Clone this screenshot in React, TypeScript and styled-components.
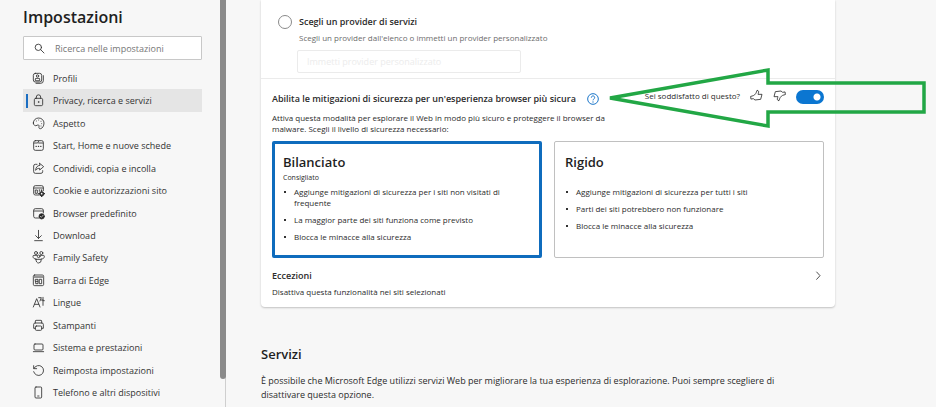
import React from "react";
import styled, { createGlobalStyle } from "styled-components";

const GlobalStyle = createGlobalStyle`
  *, *::before, *::after { box-sizing: border-box; }
  html, body, #root { height: 100%; }
  body {
    margin: 0;
    background: #f7f7f7;
    color: #2b2b2b;
    font-family: "Segoe UI", "Open Sans", "Noto Sans", sans-serif;
    font-size: 9px;
    overflow: hidden;
  }
  h1, h2, h3, p, ul { margin: 0; padding: 0; }
  ul { list-style: none; }
  button, input { font: inherit; color: inherit; }
  button { background: none; border: 0; padding: 0; cursor: pointer; }
`;

const Page = styled.div`
  position: relative;
  display: flex;
  min-height: 100%;
`;

const Sidebar = styled.aside`
  display: flex;
  flex-direction: column;
  flex: 0 0 220px;
  padding: 5px 18px 3px 23px;
`;

const Title = styled.h1`
  font-size: 16px;
  line-height: 24px;
  font-weight: 600;
  color: #1f1f1f;
`;

const SearchBox = styled.label`
  display: flex;
  align-items: center;
  gap: 10px;
  height: 24px;
  margin-top: 7px;
  padding: 0 10px;
  background: #fff;
  border: 1px solid #c8c8c8;
  border-radius: 1px;
`;

const SearchInput = styled.input`
  flex: 1;
  min-width: 0;
  border: 0;
  outline: 0;
  padding: 0;
  background: none;
  font-size: 9px;
  &::placeholder { color: #767676; opacity: 1; }
`;

const Nav = styled.nav`
  display: flex;
  flex: 1;
  margin-top: 7px;
`;

const NavList = styled.ul`
  display: grid;
  flex: 1;
  grid-auto-rows: 1fr;
`;

const NavLink = styled.a<{ $active?: boolean }>`
  display: flex;
  align-items: center;
  gap: 8px;
  height: 100%;
  padding-left: 6px;
  border-left: 3px solid transparent;
  color: #333;
  font-size: 9px;
  text-decoration: none;
  white-space: nowrap;
  background: ${(p) =>
    p.$active
      ? "linear-gradient(#1b6ec2, #1b6ec2) 0 50% / 2px 14px no-repeat, #e5e5e5"
      : "none"};
`;

const ScrollTrack = styled.div`
  display: flex;
  flex: 0 0 6px;
  padding-bottom: 28px;
  border-right: 1px solid #cfcfcf;
`;

const ScrollThumb = styled.div`
  flex: 1;
  margin-right: -1px;
  background: #8b8b8b;
  border-radius: 0 0 3px 3px;
`;

const Main = styled.main`
  flex: 1;
  min-width: 0;
  padding: 0 101px 0 35px;
`;

const Panel = styled.section`
  background: #fff;
  border-radius: 0 0 4px 4px;
  box-shadow: 0 1px 2px rgba(0, 0, 0, 0.22);
`;

const ProviderGroup = styled.div`
  display: grid;
  grid-template-columns: 14px 1fr;
  column-gap: 7px;
  padding: 15px 17px 5px;
  border-bottom: 1px solid #ebebeb;
`;

const Radio = styled.input`
  appearance: none;
  width: 14px;
  height: 14px;
  margin: 0;
  border: 1px solid #8a8a8a;
  border-radius: 50%;
  background: #fff;
`;

const ProviderLabel = styled.label`
  font-size: 9px;
  line-height: 14px;
  font-weight: 600;
`;

const ProviderHint = styled.p`
  grid-column: 2;
  margin-top: 3px;
  font-size: 8px;
  line-height: 12px;
  color: #6c6c6c;
`;

const ProviderInput = styled.input`
  grid-column: 2;
  width: 224px;
  height: 23px;
  margin: 6px 0 0 -2px;
  padding: 0 9px;
  background: #fff;
  border: 1px solid #ebebeb;
  border-radius: 2px;
  font-size: 9px;
  &::placeholder { color: #ececec; opacity: 1; }
`;

const Setting = styled.div`
  padding: 8px 11px 0;
`;

const SettingHeader = styled.div`
  display: flex;
  align-items: center;
  height: 20px;
`;

const SettingTitle = styled.h3`
  padding-top: 4px;
  font-size: 9px;
  line-height: 16px;
  font-weight: 600;
  white-space: nowrap;
`;

const IconButton = styled.button`
  display: flex;
`;

const HelpButton = styled(IconButton)`
  margin: 3px 0 0 11px;
`;

const Feedback = styled.div`
  display: flex;
  align-items: center;
  gap: 10px;
  margin-left: auto;
  padding-bottom: 3px;
  font-size: 8px;
  line-height: 12px;
  white-space: nowrap;
`;

const Switch = styled.input`
  appearance: none;
  width: 28px;
  height: 14px;
  margin: 2px 0 0;
  border-radius: 7px;
  background: radial-gradient(circle at 21px 7px, #fff 3px, transparent 4px), #0b76d1;
`;

const Description = styled.p`
  max-width: 344px;
  margin-top: 5px;
  font-size: 8px;
  line-height: 11px;
`;

const Levels = styled.div`
  display: grid;
  grid-template-columns: 1fr 1fr;
  gap: 12px;
  margin-top: 7px;
`;

const LevelCard = styled.label<{ $selected?: boolean }>`
  display: block;
  min-height: 117px;
  padding: ${(p) => (p.$selected ? "9px 8px" : "11px 10px")};
  border: ${(p) => (p.$selected ? "3px solid #0f6cbd" : "1px solid #c0c0c0")};
  border-radius: 2px;
  cursor: pointer;
`;

const HiddenRadio = styled.input`
  appearance: none;
  position: absolute;
  width: 0;
  height: 0;
  margin: 0;
`;

const LevelTitle = styled.h3`
  font-size: 13px;
  line-height: 18px;
  font-weight: 600;
  color: #1f1f1f;
`;

const LevelCaption = styled.p`
  height: 10px;
  margin-top: 2px;
  font-size: 7px;
  line-height: 10px;
`;

const LevelPoints = styled.ul`
  display: grid;
  gap: 6px;
  margin-top: 3px;
`;

const LevelPoint = styled.li`
  display: grid;
  grid-template-columns: 11px 1fr;
  padding-right: 26px;
  font-size: 8px;
  line-height: 11px;
  &::before {
    content: "";
    width: 2px;
    height: 2px;
    margin: 5px 0 0 1px;
    background: #333;
  }
`;

const LinkRow = styled.button`
  display: flex;
  width: 100%;
  justify-content: space-between;
  padding: 11px 11px 9px;
  text-align: left;
`;

const LinkText = styled.span`
  display: grid;
  gap: 3px;
  font-size: 8px;
  line-height: 12px;
`;

const LinkTitle = styled.span`
  font-size: 9px;
  line-height: 14px;
  font-weight: 600;
`;

const Services = styled.section`
  padding-top: 37px;
`;

const SectionTitle = styled.h2`
  font-size: 13px;
  line-height: 20px;
  font-weight: 600;
  color: #1f1f1f;
`;

const SectionText = styled.p`
  margin-top: 10px;
  padding-right: 30px;
  font-size: 9px;
  line-height: 14px;
`;

const Arrow = styled.svg`
  position: absolute;
  top: 66px;
  right: 9px;
  pointer-events: none;
`;

const Glyph = ({ size = 13, children }: { size?: number; children: React.ReactNode }) => (
  <svg
    width={size}
    height={size}
    viewBox={`0 0 ${size * 3} ${size * 3}`}
    fill="none"
    stroke="#333"
    strokeWidth="2.6"
    strokeLinecap="round"
    strokeLinejoin="round"
    aria-hidden="true"
  >
    {children}
  </svg>
);

const navItems: { label: string; active?: boolean; icon: React.ReactNode }[] = [
  {
    label: "Profili",
    icon: (
      <>
        <rect x="4" y="4" width="25" height="26" rx="6" />
        <circle cx="16.5" cy="12" r="3.5" />
        <path d="M10 25v-4q0-2 2-2h9q2 0 2 2v4zM34 11v15q0 8-8 8H12" />
      </>
    ),
  },
  {
    label: "Privacy, ricerca e servizi",
    active: true,
    icon: (
      <>
        <rect x="7" y="13" width="25" height="22" rx="4" />
        <path d="M13 13V9a6.5 6.5 0 0 1 13 0v4" />
        <circle cx="19.5" cy="24" r="1" />
      </>
    ),
  },
  {
    label: "Aspetto",
    icon: (
      <>
        <path d="M4 18C4 9 11 3 20 3s16 7 16 15c0 9-5 16-10 17-4 1-6-2-5-6 1-5-2-7-6-4-5 3-11 0-11-7z" />
        <path d="M13 12h.1M20 9h.1M27 13h.1M29 20h.1M27 27h.1" />
      </>
    ),
  },
  {
    label: "Start, Home e nuove schede",
    icon: (
      <>
        <rect x="5" y="5" width="29" height="29" rx="5" />
        <path d="M6 12h11l3-5M20 12h13" />
        <path d="M12 22h1M19 22h1M26 22h1" strokeWidth="3.5" />
      </>
    ),
  },
  {
    label: "Condividi, copia e incolla",
    icon: (
      <>
        <path d="M15 7h-5a5 5 0 0 0-5 5v17a5 5 0 0 0 5 5h17a5 5 0 0 0 5-5v-3" />
        <path d="M23 4l12 10-12 10v-5c-6 0-10 2-12 6 0-9 5-14 12-15z" />
      </>
    ),
  },
  {
    label: "Cookie e autorizzazioni sito",
    icon: (
      <>
        <path d="M20 33H10a5 5 0 0 1-5-5V10a5 5 0 0 1 5-5h19a5 5 0 0 1 5 5v10M5 12h29" />
        <path d="M11 18h5v10h-5zM22 17v5M28 17v3" />
        <circle cx="29" cy="29" r="5" strokeWidth="5" />
        <path d="M29 20v2M29 36v2M20 29h2M36 29h2" strokeWidth="4" />
      </>
    ),
  },
  {
    label: "Browser predefinito",
    icon: (
      <>
        <path d="M20 33H10a5 5 0 0 1-5-5V10a5 5 0 0 1 5-5h19a5 5 0 0 1 5 5v8M5 12h29" />
        <circle cx="29" cy="28" r="8" fill="#222" />
        <path d="M25 28l3 3 5-6" stroke="#fff" strokeWidth="2" />
      </>
    ),
  },
  {
    label: "Download",
    icon: <path d="M19.5 4v24M11 20l8.500 8.500 8.500-8.500M8 35h23" />,
  },
  {
    label: "Family Safety",
    icon: (
      <>
        <circle cx="12" cy="6" r="4.500" />
        <circle cx="28" cy="6" r="4.500" />
        <circle cx="20" cy="16" r="4" />
        <path d="M15 13H6q-3 0-3 3c0 5 3 8 9 8M25 13h9q3 0 3 3c0 5-3 8-9 8M12 25h16q0 11-8 11t-8-11z" />
      </>
    ),
  },
  {
    label: "Barra di Edge",
    icon: (
      <>
        <rect x="4" y="3" width="31" height="32" rx="4" />
        <path d="M5 9h29" strokeWidth="4" stroke="#777" />
        <path d="M11 16h7v6h-7zM11 22v7h7v-7M23 16h6v13h-6z" />
      </>
    ),
  },
  {
    label: "Lingue",
    icon: <path d="M4 33L14 8l10 25M8 25h12M20 5h8l-4 10M33 4v24M33 12h-5M33 14h4" />,
  },
  {
    label: "Stampanti",
    icon: (
      <>
        <path d="M10 12V6q0-2 2-2h15q2 0 2 2v6M10 28H5V16q0-4 4-4h21q4 0 4 4v12h-5" />
        <rect x="10" y="21" width="19" height="13" rx="3" />
      </>
    ),
  },
  {
    label: "Sistema e prestazioni",
    icon: (
      <>
        <rect x="6" y="9" width="27" height="18" rx="3" />
        <path d="M4 32h31" />
      </>
    ),
  },
  {
    label: "Reimposta impostazioni",
    icon: <path d="M5 5v9h9M6 13A15 15 0 1 1 5 23" />,
  },
  {
    label: "Telefono e altri dispositivi",
    icon: (
      <>
        <rect x="9" y="3" width="20" height="33" rx="3" />
        <path d="M17 30h4" />
      </>
    ),
  },
];

const levels = [
  {
    title: "Bilanciato",
    caption: "Consigliato",
    selected: true,
    points: [
      "Aggiunge mitigazioni di sicurezza per i siti non visitati di frequente",
      "La maggior parte dei siti funziona come previsto",
      "Blocca le minacce alla sicurezza",
    ],
  },
  {
    title: "Rigido",
    caption: "",
    selected: false,
    points: [
      "Aggiunge mitigazioni di sicurezza per tutti i siti",
      "Parti dei siti potrebbero non funzionare",
      "Blocca le minacce alla sicurezza",
    ],
  },
];

const thumb = "M3 22l7-2c6-3 9-8 11-16 5 0 6 4 4 9l-1 3h12l-4 15-17 2-5-4-6 1z";

export default function App() {
  return (
    <>
      <GlobalStyle />
      <Page>
        <Sidebar>
          <Title>Impostazioni</Title>
          <SearchBox>
            <Glyph size={11}>
              <circle cx="13" cy="13" r="9.500" />
              <path d="M20 20l10 10" />
            </Glyph>
            <SearchInput
              type="search"
              placeholder="Ricerca nelle impostazioni"
              aria-label="Ricerca nelle impostazioni"
            />
          </SearchBox>
          <Nav>
            <NavList>
              {navItems.map((item) => (
                <li key={item.label}>
                  <NavLink
                    href="#"
                    $active={item.active}
                    aria-current={item.active ? "page" : undefined}
                  >
                    <Glyph>{item.icon}</Glyph>
                    {item.label}
                  </NavLink>
                </li>
              ))}
            </NavList>
          </Nav>
        </Sidebar>
        <ScrollTrack>
          <ScrollThumb />
        </ScrollTrack>
        <Main>
          <Panel>
            <ProviderGroup>
              <Radio type="radio" name="provider" id="provider-custom" />
              <ProviderLabel htmlFor="provider-custom">
                Scegli un provider di servizi
              </ProviderLabel>
              <ProviderHint>
                Scegli un provider dall'elenco o immetti un provider personalizzato
              </ProviderHint>
              <ProviderInput
                disabled
                placeholder="Immetti provider personalizzato"
                aria-label="Immetti provider personalizzato"
              />
            </ProviderGroup>
            <Setting>
              <SettingHeader>
                <SettingTitle>
                  Abilita le mitigazioni di sicurezza per un'esperienza browser più sicura
                </SettingTitle>
                <HelpButton aria-label="Informazioni">
                  <svg width="12" height="12" viewBox="0 0 36 36" fill="none" stroke="#1b76c9" strokeWidth="3">
                    <circle cx="18" cy="18" r="16" />
                    <path d="M13 14c0-7 10-7 10 0 0 4-5 4-5 8M18 25v4" />
                  </svg>
                </HelpButton>
                <Feedback>
                  <label htmlFor="mitigations">Sei soddisfatto di questo?</label>
                  <IconButton aria-label="Mi piace">
                    <Glyph>
                      <path d={thumb} />
                    </Glyph>
                  </IconButton>
                  <IconButton aria-label="Non mi piace">
                    <Glyph>
                      <path d={thumb} transform="rotate(180 19.500 19.500)" />
                    </Glyph>
                  </IconButton>
                  <Switch type="checkbox" role="switch" id="mitigations" defaultChecked />
                </Feedback>
              </SettingHeader>
              <Description>
                Attiva questa modalità per esplorare il Web in modo più sicuro e proteggere il
                browser da malware. Scegli il livello di sicurezza necessario:
              </Description>
              <Levels>
                {levels.map((level) => (
                  <LevelCard key={level.title} $selected={level.selected}>
                    <HiddenRadio type="radio" name="level" defaultChecked={level.selected} />
                    <LevelTitle>{level.title}</LevelTitle>
                    <LevelCaption>{level.caption}</LevelCaption>
                    <LevelPoints>
                      {level.points.map((point) => (
                        <LevelPoint key={point}>{point}</LevelPoint>
                      ))}
                    </LevelPoints>
                  </LevelCard>
                ))}
              </Levels>
            </Setting>
            <LinkRow>
              <LinkText>
                <LinkTitle>Eccezioni</LinkTitle>
                Disattiva questa funzionalità nei siti selezionati
              </LinkText>
              <Glyph size={12}>
                <path d="M14 9l10 11-10 11" />
              </Glyph>
            </LinkRow>
          </Panel>
          <Services>
            <SectionTitle>Servizi</SectionTitle>
            <SectionText>
              È possibile che Microsoft Edge utilizzi servizi Web per migliorare la tua esperienza di
              esplorazione. Puoi sempre scegliere di disattivare questa opzione.
            </SectionText>
          </Services>
        </Main>
        <Arrow width="320" height="64" viewBox="0 0 320 64" fill="none" aria-hidden="true">
          <path d="M3 32L161 4V17H317V46H161V60Z" stroke="#22a745" strokeWidth="3.500" />
        </Arrow>
      </Page>
    </>
  );
}
